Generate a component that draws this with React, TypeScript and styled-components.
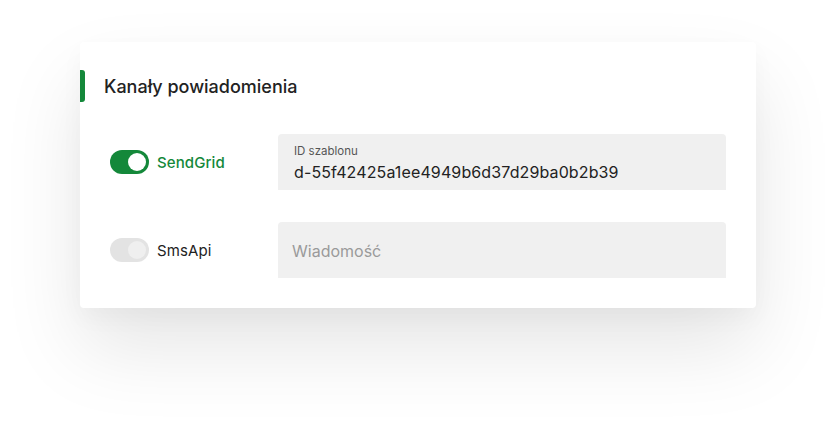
import React from "react";
import styled, { createGlobalStyle } from "styled-components";

const GREEN = "#14883a";

const Global = createGlobalStyle`
  html, body { margin: 0; padding: 0; background: #ffffff; }
  body { font-family: "Inter", "Roboto", sans-serif; -webkit-font-smoothing: antialiased; }
`;

const Page = styled.div`
  width: 836px;
  height: 428px;
  padding: 42px 0 0 80px;
  box-sizing: border-box;
  overflow: hidden;
`;

const Card = styled.section`
  width: 676px;
  background: #ffffff;
  border-radius: 4px;
  box-shadow: 0 40px 80px rgba(0, 0, 0, 0.1), 0 10px 24px rgba(0, 0, 0, 0.03);
`;

const Header = styled.header`
  display: flex;
  align-items: center;
  gap: 19px;
  padding-top: 28px;
`;

const Accent = styled.span`
  width: 5px;
  height: 32px;
  background: ${GREEN};
  border-radius: 0 3px 3px 0;
`;

const Title = styled.h2`
  margin: 0;
  font-size: 18px;
  font-weight: 500;
  color: #222222;
`;

const Body = styled.div`
  display: grid;
  row-gap: 32px;
  padding: 32px 30px 30px 30px;
`;

const Row = styled.div`
  display: grid;
  grid-template-columns: 168px 1fr;
  align-items: center;
`;

const ToggleWrap = styled.label`
  display: flex;
  align-items: center;
  gap: 8px;
`;

const Track = styled.span<{ $on: boolean }>`
  width: 39px;
  height: 24px;
  border-radius: 12px;
  background: ${(p) => (p.$on ? GREEN : "#e3e3e3")};
  display: flex;
  align-items: center;
  justify-content: flex-end;
  padding: 0 3px;
  box-sizing: border-box;
`;

const Knob = styled.span<{ $on: boolean }>`
  width: 18px;
  height: 18px;
  border-radius: 50%;
  background: ${(p) => (p.$on ? "#ffffff" : "#efefef")};
`;

const ToggleText = styled.span<{ $on: boolean }>`
  font-size: 15px;
  font-weight: ${(p) => (p.$on ? 500 : 400)};
  color: ${(p) => (p.$on ? GREEN : "#222222")};
  letter-spacing: 0.1px;
`;

const Field = styled.div`
  height: 56px;
  background: #f0f0f0;
  border-radius: 4px 4px 0 0;
  padding: 2px 16px 0;
  display: flex;
  flex-direction: column;
  justify-content: center;
  box-sizing: border-box;
`;

const FieldLabel = styled.span`
  font-size: 11.5px;
  color: #555555;
  line-height: 14px;
  margin-bottom: 4px;
`;

const FieldValue = styled.span`
  font-size: 16px;
  color: #222222;
  line-height: 20px;
  letter-spacing: 0.12px;
`;

const Placeholder = styled.span`
  font-size: 16px;
  color: #9a9a9a;
  margin-left: -2px;
`;

function Toggle({ on, label }: { on: boolean; label: string }) {
  return (
    <ToggleWrap>
      <Track $on={on}>
        <Knob $on={on} />
      </Track>
      <ToggleText $on={on}>{label}</ToggleText>
    </ToggleWrap>
  );
}

export default function App() {
  return (
    <>
      <Global />
      <Page>
        <Card>
          <Header>
            <Accent />
            <Title>Kanały powiadomienia</Title>
          </Header>
          <Body>
            <Row>
              <Toggle on label="SendGrid" />
              <Field>
                <FieldLabel>ID szablonu</FieldLabel>
                <FieldValue>d-55f42425a1ee4949b6d37d29ba0b2b39</FieldValue>
              </Field>
            </Row>
            <Row>
              <Toggle on={false} label="SmsApi" />
              <Field>
                <Placeholder>Wiadomość</Placeholder>
              </Field>
            </Row>
          </Body>
        </Card>
      </Page>
    </>
  );
}
